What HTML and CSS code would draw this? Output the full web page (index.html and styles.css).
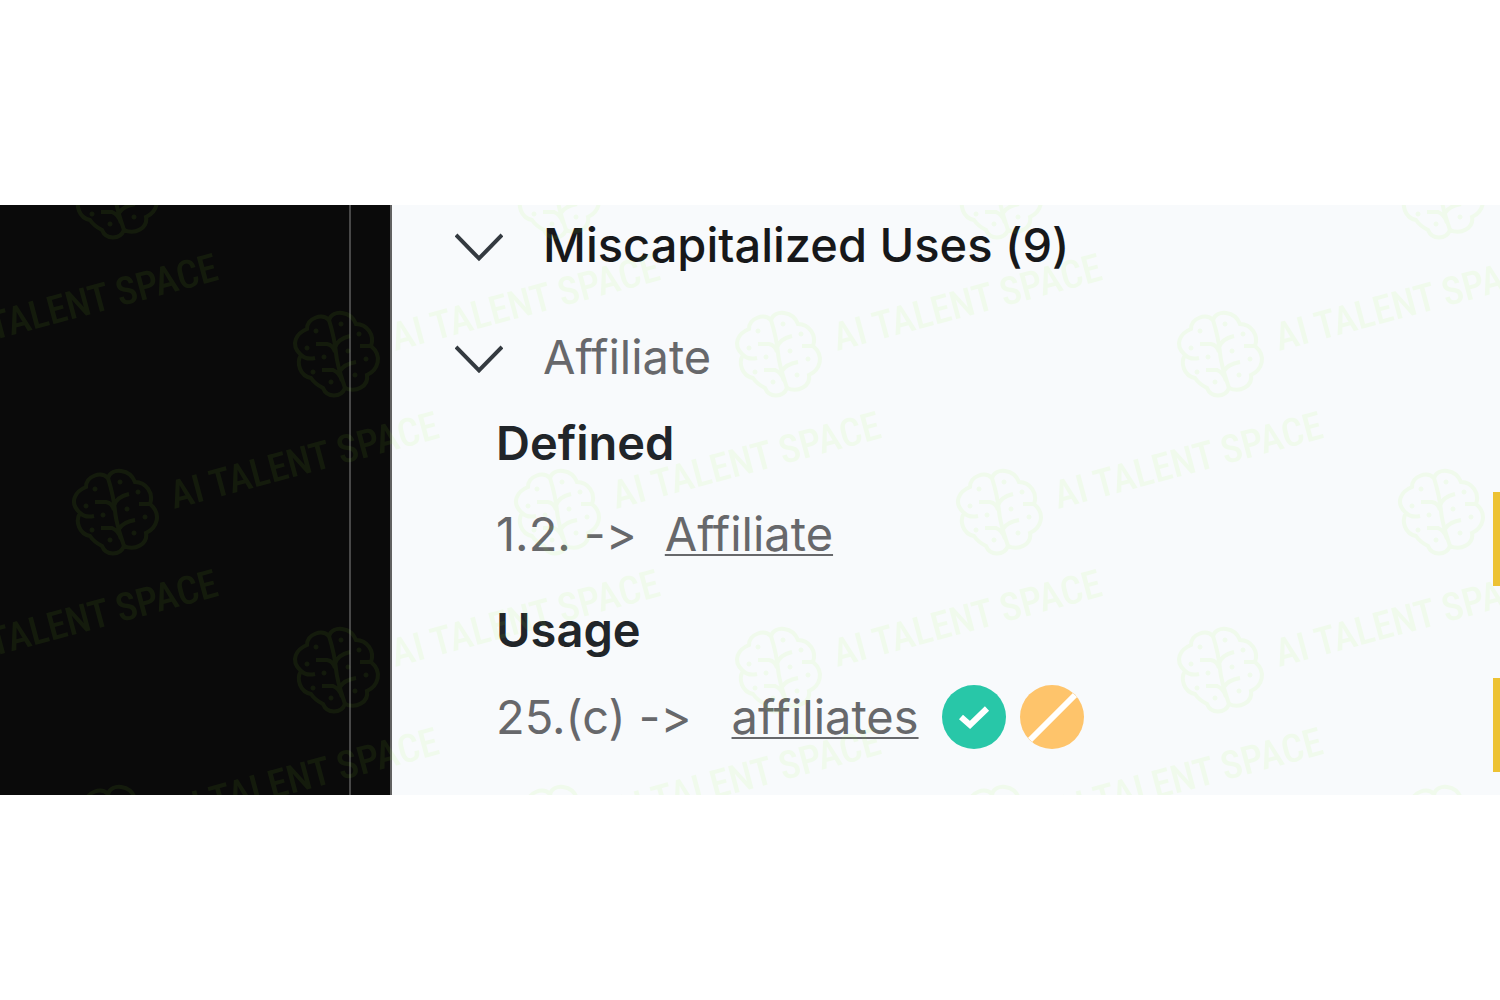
FILE: index.html
```html
<!DOCTYPE html>
<html lang="en">
<head>
<meta charset="utf-8">
<meta name="viewport" content="width=device-width, initial-scale=1">
<title>Miscapitalized Uses</title>
<link rel="stylesheet" href="styles.css">
</head>
<body>
<main class="viewer">
  <aside class="rail"><div class="rail-track"></div></aside>
  <section class="panel">
    <button class="toggle toggle-main" type="button" aria-expanded="true">
      <svg class="chevron" viewBox="0 0 48 30" aria-hidden="true"><path d="M1 2 24 25.5 47 2"/></svg>
      <span>Miscapitalized Uses (9)</span>
    </button>
    <button class="toggle toggle-term" type="button" aria-expanded="true">
      <svg class="chevron" viewBox="0 0 48 30" aria-hidden="true"><path d="M1 2 24 25.5 47 2"/></svg>
      <span>Affiliate</span>
    </button>
    <div class="details">
      <h3 class="heading">Defined</h3>
      <div class="entry entry-defined">
        <span>1.2. -&gt;</span>
        <a class="term" href="#defined">Affiliate</a>
      </div>
      <h3 class="heading">Usage</h3>
      <div class="entry entry-usage">
        <span>25.(c) -&gt;</span>
        <a class="term" href="#usage">affiliates</a>
        <div class="actions">
          <button class="action accept" type="button" aria-label="Accept">
            <svg viewBox="0 0 64 64" aria-hidden="true"><path d="M19 32 28 40 45 23.500" stroke-width="6"/></svg>
          </button>
          <button class="action ignore" type="button" aria-label="Ignore">
            <svg viewBox="0 0 64 64" aria-hidden="true"><path d="M10 55 55 10" stroke-width="6"/></svg>
          </button>
        </div>
      </div>
    </div>
  </section>
  <div class="markers">
    <div class="marker"></div>
    <div class="marker"></div>
  </div>
  <svg class="watermark" aria-hidden="true">
    <defs>
      <g id="brand">
        <g class="brain">
          <path d="M-7 -33C-14 -40 -29 -35 -29 -24C-39 -20 -47 -9 -35 2C-40 10 -36 23 -25 25C-21 31 -17 33 -13 35C-9 45 5 45 9 35C20 40 33 33 31 22C42 17 47 3 35 -7C39 -18 31 -29 20 -29C15 -42 -3 -44 -7 -33Z"/>
          <path d="M-7 -33C-3 -20 -1 -11 0 0C1 12 5 23 9 35M-20 -9H-9Q-3 -8 -1 -1M-1 -5Q1 -14 14 -17M-14 17H-3Q4 20 6 28M4 18Q8 11 20 9M35 -7H24M-35 2Q-30 7 -21 5"/>
          <g class="nodes"><circle cx="-20" cy="-22" r="2"/><circle cx="-29" cy="-5" r="2"/><circle cx="-12" cy="4" r="2"/><circle cx="-23" cy="19" r="2"/><circle cx="-5" cy="29" r="2"/><circle cx="5" cy="-29" r="2"/><circle cx="23" cy="-19" r="2"/><circle cx="12" cy="-2" r="2"/><circle cx="30" cy="6" r="2"/><circle cx="19" cy="22" r="2"/></g>
        </g>
        <text class="brand-name" transform="translate(59 -2) rotate(-15)">AI TALENT SPACE</text>
      </g>
      <pattern id="brand-tile" width="442" height="316" patternUnits="userSpaceOnUse">
        <use href="#brand" x="-106" y="148"/>
        <use href="#brand" x="336" y="148"/>
        <use href="#brand" x="115" y="306"/>
        <use href="#brand" x="115" y="-10"/>
        <use href="#brand" x="-327" y="306"/>
        <use href="#brand" x="-327" y="-10"/>
      </pattern>
    </defs>
    <rect width="100%" height="100%" fill="url(#brand-tile)"/>
  </svg>
</main>
</body>
</html>
```
FILE: styles.css
```css
* {
  box-sizing: border-box;
}

body {
  margin: 0;
  min-height: 100vh;
  display: flex;
  align-items: center;
  background: #fff;
  font-family: Inter, "Liberation Sans", sans-serif;
  font-size: 47px;
  font-variant-ligatures: none;
  line-height: 56px;
  color: #67686b;
}

.viewer {
  position: relative;
  display: flex;
  width: 100%;
  overflow: hidden;
  background: #f8fafc;
}

.rail {
  flex: 0 0 392px;
  display: flex;
  background: #0a0a0a;
  border-right: 2px solid #626262;
}

.rail-track {
  width: 351px;
  border-right: 2px solid #484848;
}

.panel {
  flex: 1;
  min-width: 0;
  padding: 12px 0 46px 63px;
}

button {
  padding: 0;
  border: 0;
  background: none;
  font: inherit;
  color: inherit;
  cursor: pointer;
}

.toggle {
  display: flex;
  align-items: center;
  gap: 40px;
  text-align: left;
}

.toggle-main {
  margin-bottom: 56px;
  font-weight: 500;
  color: #17181a;
}

.toggle-term {
  margin-bottom: 30px;
}

.chevron {
  width: 48px;
  height: 30px;
  margin-top: 5px;
  fill: none;
  stroke: #343a40;
  stroke-width: 4;
}

.details {
  padding-left: 41px;
}

.heading {
  margin: 0;
  font-size: 47px;
  font-weight: 600;
  color: #212529;
}

.entry {
  display: flex;
  align-items: center;
}

.entry-defined {
  gap: 28px;
  margin: 35px 0 40px;
}

.entry-usage {
  gap: 40px;
  margin-top: 27px;
}

.term {
  color: inherit;
  text-decoration-thickness: 2px;
  text-underline-offset: 3px;
  text-decoration-skip-ink: none;
}

.actions {
  display: flex;
  gap: 14px;
  margin-left: -17px;
}

.action {
  width: 64px;
  height: 64px;
  border-radius: 50%;
  overflow: hidden;
}

.action svg {
  display: block;
  fill: none;
  stroke: #fff;
}

.accept {
  background: #28c7a8;
}

.ignore {
  background: #fec46b;
}

.markers {
  flex: 0 0 7px;
  display: flex;
  flex-direction: column;
  gap: 92px;
  padding-top: 287px;
}

.marker {
  height: 94px;
  background: #edc233;
}

.watermark {
  position: absolute;
  inset: 0;
  width: 100%;
  height: 100%;
  pointer-events: none;
  opacity: 0.07;
}

.brain {
  fill: none;
  stroke: #94fa28;
  stroke-width: 4;
}

.nodes {
  fill: #94fa28;
  stroke-width: 1;
}

.brand-name {
  font-family: "Roboto Condensed", "Liberation Sans Narrow", Roboto, sans-serif;
  font-size: 39px;
  font-weight: 500;
  fill: #94fa28;
}
```
